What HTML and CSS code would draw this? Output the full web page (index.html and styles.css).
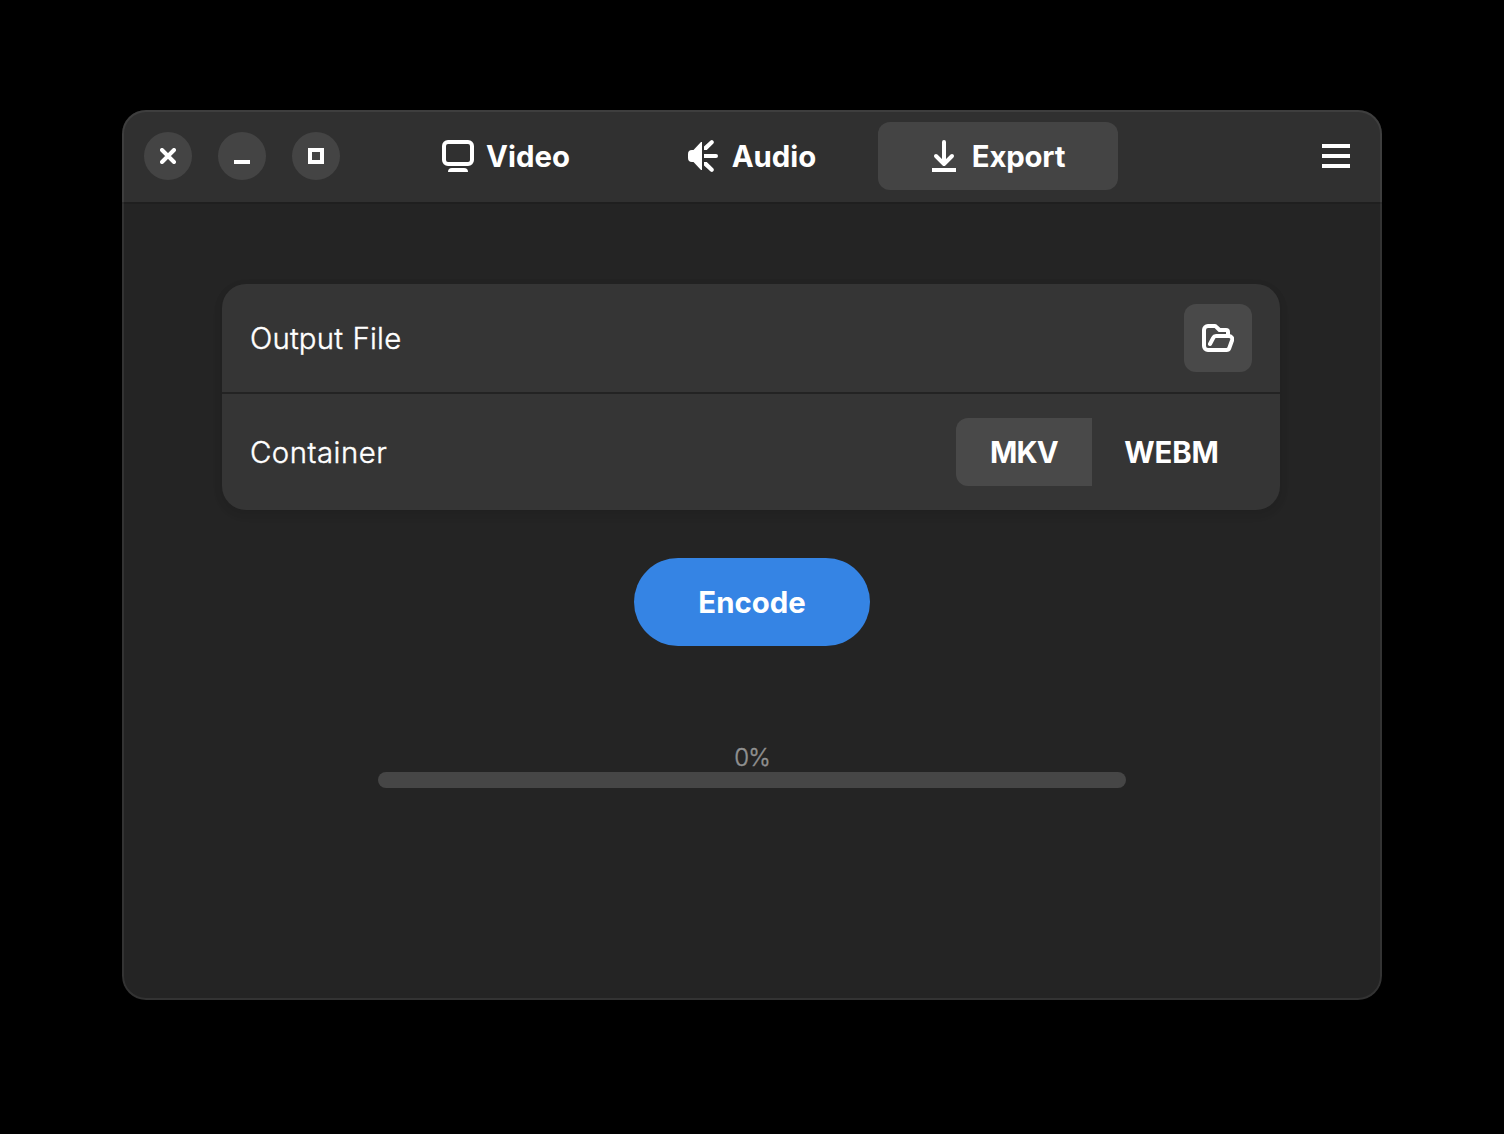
FILE: index.html
```html
<!DOCTYPE html>
<html lang="en">
<head>
<meta charset="utf-8">
<title>Export</title>
<link rel="stylesheet" href="styles.css">
</head>
<body>
<main class="window">
  <header class="headerbar">
    <div class="controls">
      <button class="control" aria-label="Close"><svg class="glyph" viewBox="0 0 16 16"><path d="M2 2l12 12M14 2L2 14" stroke="#fff" stroke-width="4" stroke-linecap="round"/></svg></button>
      <button class="control" aria-label="Minimize"><svg class="glyph" viewBox="0 0 16 16"><path d="M0 12h16v4H0z" fill="#fff"/></svg></button>
      <button class="control" aria-label="Maximize"><svg class="glyph" viewBox="0 0 16 16"><path d="M2 2h12v12H2z" fill="none" stroke="#fff" stroke-width="4"/></svg></button>
    </div>
    <nav class="tabs">
      <button class="tab">
        <svg class="icon" viewBox="0 0 32 32"><rect x="2" y="2" width="28" height="22" rx="4" fill="none" stroke="#fff" stroke-width="4"/><path d="M10 28h12a4 4 0 0 1 4 4H6a4 4 0 0 1 4-4z" fill="#fff"/></svg>
        <span class="label">Video</span>
      </button>
      <button class="tab">
        <svg class="icon" viewBox="0 0 32 32"><path d="M14 2v28h-1L5.500 22H4a4 4 0 0 1-4-4v-4a4 4 0 0 1 4-4h1.500L13 2z" fill="#fff"/><path d="M16 14h12a2 2 0 0 1 0 4H16zM16 6.500L22.600 .6a2 2 0 0 1 2.800 2.800L18.800 10H16zM16 25.500L22.600 31.400a2 2 0 0 0 2.800-2.800L18.800 22H16z" fill="#fff"/></svg>
        <span class="label">Audio</span>
      </button>
      <button class="tab active">
        <svg class="icon" viewBox="0 0 32 32"><path d="M16 2v21M8 16l8 8 8-8" fill="none" stroke="#fff" stroke-width="4" stroke-linecap="round" stroke-linejoin="round"/><path d="M4 28h24v4H4z" fill="#fff"/></svg>
        <span class="label export-label">Export</span>
      </button>
    </nav>
    <button class="menu" aria-label="Menu"><svg class="menu-icon" viewBox="0 0 28 24"><path d="M0 0h28v4H0zM0 10h28v4H0zM0 20h28v4H0z" fill="#fff"/></svg></button>
  </header>
  <section class="content">
    <div class="card">
      <div class="row file-row">
        <span class="title file-title">Output File</span>
        <button class="open" aria-label="Choose file"><svg class="icon" viewBox="0 0 32 32"><path d="M26 12v-2a2 2 0 0 0-2-2h-6.500l-3.500-3.400A2 2 0 0 0 12.500 4H6a4 4 0 0 0-4 4v16a4 4 0 0 0 4 4h18.500a3 3 0 0 0 2.800-2L30 18.500A3.200 3.200 0 0 0 27.200 14H14a3 3 0 0 0-2.700 1.700L8 22" fill="none" stroke="#fff" stroke-width="4" stroke-linecap="round" stroke-linejoin="round"/></svg></button>
      </div>
      <div class="row container-row">
        <span class="title">Container</span>
        <div class="switcher">
          <button class="choice mkv"><span class="label">MKV</span></button>
          <button class="choice webm"><span class="label">WEBM</span></button>
        </div>
      </div>
    </div>
    <button class="encode"><span class="label">Encode</span></button>
    <div class="progress">
      <span class="percent">0%</span>
      <div class="trough"></div>
    </div>
  </section>
</main>
</body>
</html>
```
FILE: styles.css
```css
* { box-sizing: border-box; }
body {
  margin: 0;
  height: 1134px;
  padding-top: 110px;
  background: #000;
  color: #fff;
  font: 400 29.33px/36px Inter, "Liberation Sans", sans-serif;
  overflow: hidden;
}
button {
  margin: 0;
  padding: 0;
  border: 0;
  background: transparent;
  color: inherit;
  font: inherit;
  font-weight: 700;
  display: flex;
  align-items: center;
  justify-content: center;
}
svg { display: block; flex: none; }
.label, .title, .percent { white-space: nowrap; }
.label, .title { padding-top: 2px; }
.window {
  position: relative;
  width: 1260px;
  height: 890px;
  margin: 0 auto;
  border-radius: 24px;
  overflow: hidden;
  background: #242424;
}
.window::after {
  content: "";
  position: absolute;
  inset: 0;
  border-radius: 24px;
  box-shadow: inset 0 0 0 2px rgba(255, 255, 255, 0.07);
  pointer-events: none;
}
.headerbar {
  display: grid;
  grid-template-columns: 1fr 732px 1fr;
  align-items: center;
  height: 94px;
  padding: 0 22px;
  background: #303030;
  border-bottom: 2px solid #1f1f1f;
}
.controls { display: flex; gap: 26px; }
.control {
  width: 48px;
  height: 48px;
  border-radius: 50%;
  background: #444;
}
.glyph { width: 16px; height: 16px; }
.icon { width: 32px; height: 32px; }
.tabs { display: flex; gap: 6px; }
.tab {
  width: 240px;
  height: 68px;
  gap: 12px;
  border-radius: 12px;
}
.active { background: #444; padding-right: 3px; }
.export-label { letter-spacing: -0.2px; }
.menu { justify-self: end; width: 48px; height: 68px; }
.menu-icon { width: 28px; height: 24px; }
.content {
  display: flex;
  flex-direction: column;
  align-items: center;
  padding-top: 80px;
}
.card {
  width: 1058px;
  margin-right: 2px;
  border-radius: 24px;
  background: #353535;
  box-shadow: 0 2px 6px 2px rgba(0, 0, 0, 0.07), 0 4px 12px 2px rgba(0, 0, 0, 0.03);
}
.row {
  display: flex;
  align-items: center;
  justify-content: space-between;
  padding: 0 28px;
}
.file-row { height: 110px; border-bottom: 2px solid #232323; }
.container-row { height: 116px; }
.title { font-weight: 300; letter-spacing: 0.5px; -webkit-text-stroke: 0.4px #fff; }
.file-title { letter-spacing: 0.2px; word-spacing: 1px; }
.open { width: 68px; height: 68px; border-radius: 12px; background: #494949; }
.switcher { display: flex; }
.choice { height: 68px; }
.mkv { width: 136px; border-radius: 12px 0 0 12px; background: #494949; letter-spacing: -0.8px; }
.webm { width: 160px; padding-right: 1px; letter-spacing: -0.1px; }
.encode {
  width: 236px;
  height: 88px;
  margin-top: 48px;
  border-radius: 44px;
  background: #3584e4;
}
.progress {
  display: flex;
  flex-direction: column;
  align-items: center;
  width: 748px;
  margin-top: 96px;
}
.percent {
  height: 30px;
  padding-top: 1px;
  color: #929292;
  font-size: 24px;
  font-weight: 300;
  line-height: 30px;
  letter-spacing: -0.8px;
  -webkit-text-stroke: 0.4px #929292;
}
.trough { width: 100%; height: 16px; border-radius: 8px; background: #464646; }
```
